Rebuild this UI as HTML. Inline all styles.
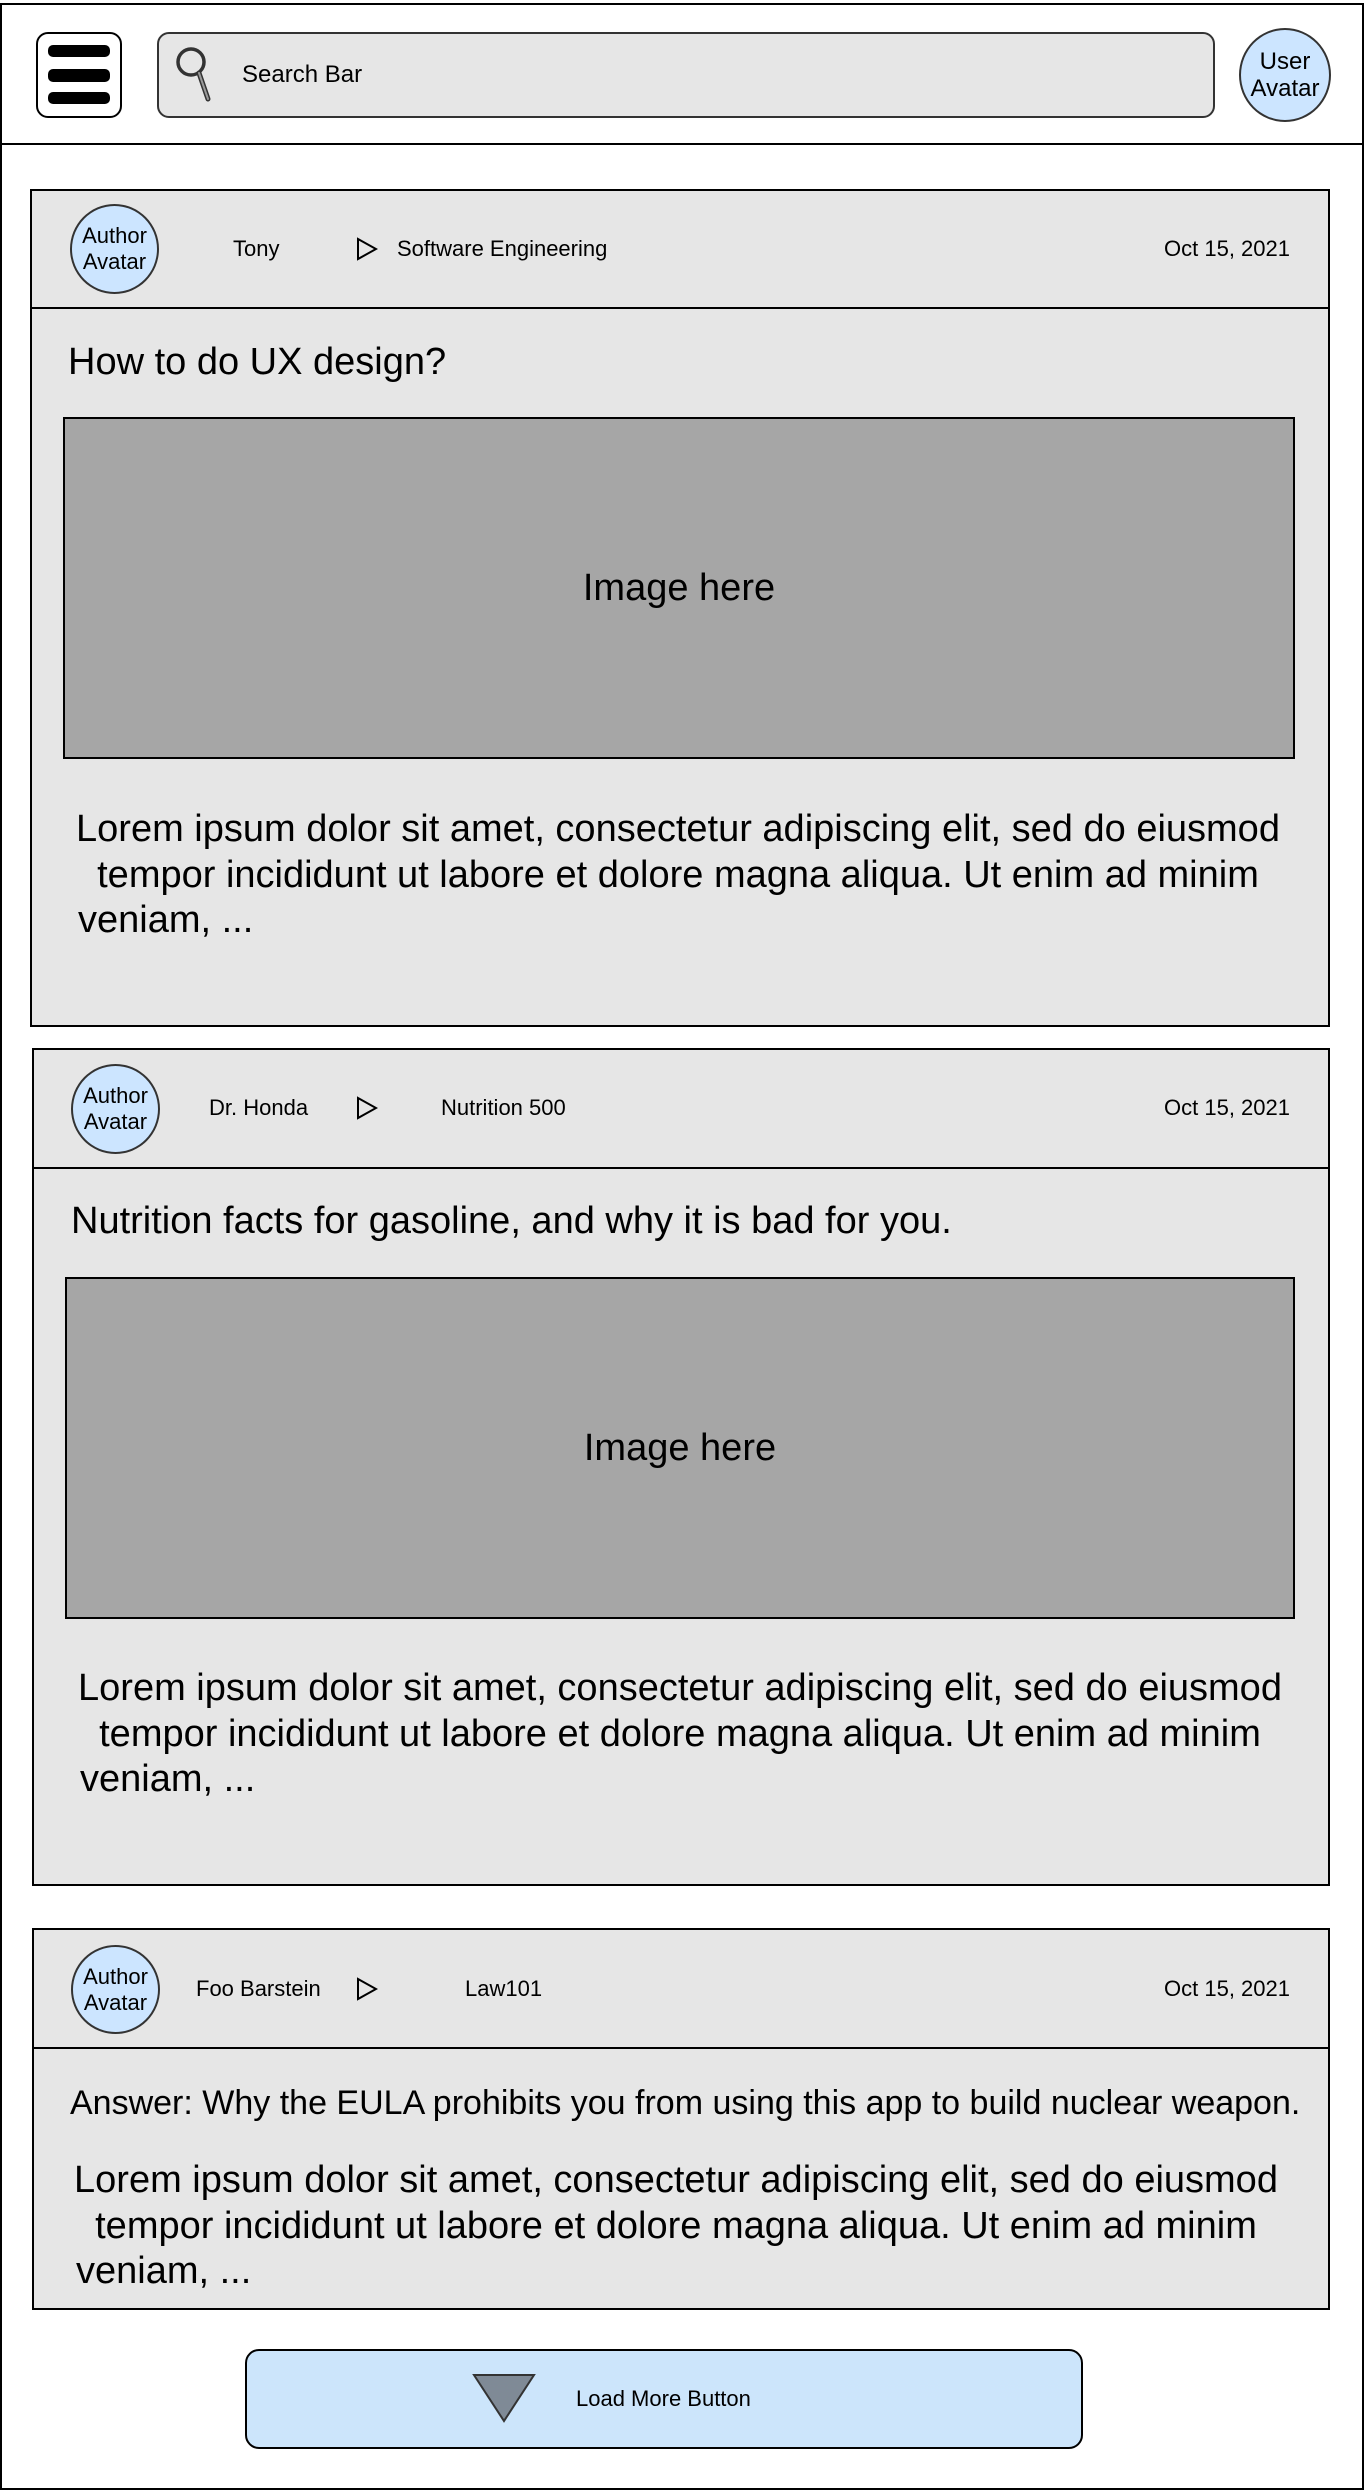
<!DOCTYPE html>
<html><head><meta charset="utf-8"><style>
*{margin:0;padding:0;box-sizing:border-box}
body{width:1364px;height:2492px;background:#fff;font-family:"Liberation Sans",Arial,sans-serif;color:#000;position:relative;overflow:hidden}
.a{position:absolute}
.frame{left:0;top:3px;width:1364px;height:2487px;border:2px solid #000}
.hline{left:0;width:1364px;height:2px;background:#000}
.card{background:#e6e6e6;border:2px solid #000}
.av{background:#cce5ff;border:2px solid #333;border-radius:50%;display:flex;align-items:center;justify-content:center;text-align:center;font-size:22px;line-height:26px}
.sm{font-size:22px;line-height:24px;white-space:nowrap}
.title{font-size:38px;white-space:nowrap;line-height:44px}
.img{background:#a6a6a6;border:2px solid #000;display:flex;align-items:center;justify-content:center;font-size:38px}
.lorem{font-size:38px;line-height:45.5px;white-space:nowrap}
.lorem .c{display:block;text-align:center;width:1220px}
.lorem .l{display:block;text-align:left}
</style></head><body>
<div class="a frame"></div>
<div class="a hline" style="top:143px"></div>
<!-- hamburger -->
<div class="a" style="left:36px;top:32px;width:86px;height:86px;border:2px solid #000;border-radius:12px;background:#fff"></div>
<div class="a" style="left:48px;top:45px;width:62px;height:12px;background:#000;border-radius:5px"></div>
<div class="a" style="left:48px;top:69px;width:62px;height:13px;background:#000;border-radius:5px"></div>
<div class="a" style="left:48px;top:92px;width:62px;height:12px;background:#000;border-radius:5px"></div>
<!-- search -->
<div class="a" style="left:157px;top:32px;width:1058px;height:86px;border:2px solid #333;border-radius:12px;background:#e6e6e6"></div>
<svg class="a" style="left:172px;top:45px" width="50" height="60" viewBox="0 0 50 60"><circle cx="19" cy="17" r="13" fill="none" stroke="#333" stroke-width="3.5"/><path d="M27 28 L36 54" stroke="#333" stroke-width="5" stroke-linecap="round"/><path d="M27 28 L36 54" stroke="#999" stroke-width="2" stroke-linecap="round"/></svg>
<div class="a" style="left:242px;top:61px;font-size:24px">Search Bar</div>
<div class="a av" style="left:1239px;top:28px;width:92px;height:94px;font-size:24px;line-height:27px">User<br>Avatar</div>

<!-- card 1 -->
<div class="a card" style="left:30px;top:189px;width:1300px;height:838px"></div>
<div class="a hline" style="left:30px;top:307px;width:1300px"></div>
<div class="a av" style="left:70px;top:204px;width:89px;height:90px">Author<br>Avatar</div>
<div class="a sm" style="left:233px;top:237px">Tony</div>
<svg class="a" style="left:356px;top:237px" width="22" height="24"><path d="M2 2 L20 12 L2 22 Z" fill="none" stroke="#000" stroke-width="2"/></svg>
<div class="a sm" style="left:397px;top:237px">Software Engineering</div>
<div class="a sm" style="right:74px;top:237px">Oct 15, 2021</div>
<div class="a title" style="left:68px;top:340px">How to do UX design?</div>
<div class="a img" style="left:63px;top:417px;width:1232px;height:342px">Image here</div>
<div class="a lorem" style="left:68px;top:807px"><span class="c">Lorem ipsum dolor sit amet, consectetur adipiscing elit, sed do eiusmod</span><span class="c">tempor incididunt ut labore et dolore magna aliqua. Ut enim ad minim</span><span class="l" style="padding-left:10px">veniam, ...</span></div>

<!-- card 2 -->
<div class="a card" style="left:32px;top:1048px;width:1298px;height:838px"></div>
<div class="a hline" style="left:32px;top:1167px;width:1298px"></div>
<div class="a av" style="left:71px;top:1064px;width:89px;height:90px">Author<br>Avatar</div>
<div class="a sm" style="left:209px;top:1096px">Dr. Honda</div>
<svg class="a" style="left:356px;top:1096px" width="22" height="24"><path d="M2 2 L20 12 L2 22 Z" fill="none" stroke="#000" stroke-width="2"/></svg>
<div class="a sm" style="left:441px;top:1096px">Nutrition 500</div>
<div class="a sm" style="right:74px;top:1096px">Oct 15, 2021</div>
<div class="a title" style="left:71px;top:1199px">Nutrition facts for gasoline, and why it is bad for you.</div>
<div class="a img" style="left:65px;top:1277px;width:1230px;height:342px">Image here</div>
<div class="a lorem" style="left:70px;top:1666px"><span class="c">Lorem ipsum dolor sit amet, consectetur adipiscing elit, sed do eiusmod</span><span class="c">tempor incididunt ut labore et dolore magna aliqua. Ut enim ad minim</span><span class="l" style="padding-left:10px">veniam, ...</span></div>

<!-- card 3 -->
<div class="a card" style="left:32px;top:1928px;width:1298px;height:382px"></div>
<div class="a hline" style="left:32px;top:2047px;width:1298px"></div>
<div class="a av" style="left:71px;top:1945px;width:89px;height:89px">Author<br>Avatar</div>
<div class="a sm" style="left:196px;top:1977px">Foo Barstein</div>
<svg class="a" style="left:356px;top:1977px" width="22" height="24"><path d="M2 2 L20 12 L2 22 Z" fill="none" stroke="#000" stroke-width="2"/></svg>
<div class="a sm" style="left:465px;top:1977px">Law101</div>
<div class="a sm" style="right:74px;top:1977px">Oct 15, 2021</div>
<div class="a" style="left:70px;top:2084px;font-size:34px;white-space:nowrap">Answer: Why the EULA prohibits you from using this app to build nuclear weapon.</div>
<div class="a lorem" style="left:66px;top:2158px"><span class="c">Lorem ipsum dolor sit amet, consectetur adipiscing elit, sed do eiusmod</span><span class="c">tempor incididunt ut labore et dolore magna aliqua. Ut enim ad minim</span><span class="l" style="padding-left:10px">veniam, ...</span></div>

<!-- load more -->
<div class="a" style="left:245px;top:2349px;width:838px;height:100px;background:#cce5fb;border:2px solid #000;border-radius:14px"></div>
<svg class="a" style="left:472px;top:2373px" width="64" height="50"><path d="M2 2 L62 2 L32 48 Z" fill="#7f8a96" stroke="#333" stroke-width="2"/></svg>
<div class="a" style="left:576px;top:2386px;font-size:22px;white-space:nowrap">Load More Button</div>
</body></html>
